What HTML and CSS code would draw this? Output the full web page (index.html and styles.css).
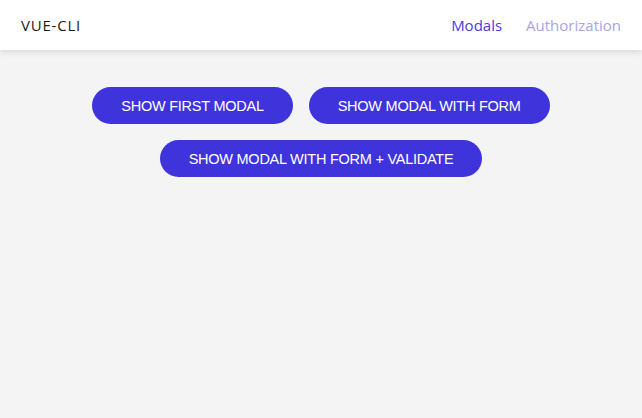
FILE: index.html
```html
<!DOCTYPE html>
<html>
<head>
<meta charset="utf-8">
<link rel="stylesheet" href="styles.css">
</head>
<body>
<header class="header">
  <div class="logo">VUE-CLI</div>
  <nav class="nav">
    <a class="nav-link active">Modals</a>
    <a class="nav-link">Authorization</a>
  </nav>
</header>
<main class="main">
  <div class="row">
    <button class="btn">SHOW FIRST MODAL</button>
    <button class="btn">SHOW MODAL WITH FORM</button>
  </div>
  <div class="row">
    <button class="btn">SHOW MODAL WITH FORM + VALIDATE</button>
  </div>
</main>
</body>
</html>
```
FILE: styles.css
```css
* { box-sizing: border-box; }
html, body { margin: 0; padding: 0; }
body {
  background: #f4f4f4;
  width: 642px;
  height: 418px;
  overflow: hidden;
  font-family: "Open Sans", "Liberation Sans", sans-serif;
}
.header {
  height: 50px;
  background: #fff;
  display: flex;
  align-items: center;
  justify-content: space-between;
  padding: 0 21px 0 21px;
  box-shadow: 0 2px 6px rgba(0,0,0,0.12);
  position: relative;
}
.logo {
  font-size: 15px;
  color: #1c1c1c;
  letter-spacing: 0.8px;
}
.nav { display: flex; gap: 24px; }
.nav-link {
  font-size: 15px;
  color: #aaa4de;
}
.nav-link.active { color: #4a3dd3; }
.main {
  padding-top: 37px;
  display: flex;
  flex-direction: column;
  align-items: center;
  gap: 16px;
}
.row { display: flex; gap: 16px; justify-content: center; }
.btn {
  height: 37px;
  padding: 0 29px;
  border: none;
  border-radius: 19px;
  background: #3f33db;
  color: #fff;
  font-family: "Liberation Sans", Arial, sans-serif;
  font-size: 14.5px;
  letter-spacing: -0.25px;
}
```
